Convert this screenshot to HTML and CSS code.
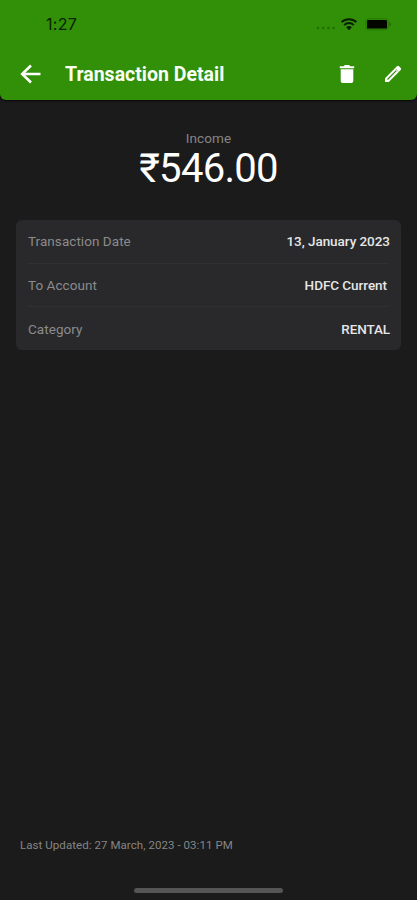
FILE: index.html
```html
<!DOCTYPE html>
<html lang="en">
<head>
<meta charset="utf-8">
<meta name="viewport" content="width=device-width, initial-scale=1">
<title>Transaction Detail</title>
<link rel="stylesheet" href="styles.css">
</head>
<body>
<div class="screen">
  <header class="header">
    <div class="status">
      <span class="time">1:27</span>
      <div class="indicators">
        <svg class="signal" width="20" height="4" viewBox="0 0 20 4"><g fill="#195b00" opacity=".65"><circle cx="2" cy="2" r="1.2"/><circle cx="7.2" cy="2" r="1.2"/><circle cx="12.4" cy="2" r="1.2"/><circle cx="17.6" cy="2" r="1.2"/></g></svg>
        <svg class="wifi" width="18" height="14" viewBox="0 0 18 14"><g fill="none" stroke="#061d00" stroke-width="2"><path d="M1.6 5.1a10.7 10.7 0 0 1 14.8 0"/><path d="M4.2 8.1a6.8 6.8 0 0 1 9.6 0"/></g><path d="M6.2 10.3a4 4 0 0 1 5.6 0L9 13.2z" fill="#061d00"/></svg>
        <svg class="battery" width="27" height="13" viewBox="0 0 27 13"><rect x=".8" y=".8" width="22.4" height="11" rx="2.6" fill="none" stroke="#267800" stroke-width="1"/><rect x="2" y="2" width="20" height="8.6" rx="1.2" fill="#020500"/><path d="M24.5 4.2c2 .7 2 3.5 0 4.2z" fill="#1e6a00"/></svg>
      </div>
    </div>
    <div class="toolbar">
      <svg class="back" width="22" height="20" viewBox="0 0 22 20"><path d="M20.5 10H2.5M11 1.5L2.2 10l8.8 8.5" fill="none" stroke="#fff" stroke-width="2.6"/></svg>
      <h1 class="title">Transaction Detail</h1>
      <svg class="trash" width="16" height="20" viewBox="0 0 16 20"><path d="M.8 2.2h4L5.8 1h4.4l1 1.2h4v2H.8zM1.7 5.2h12.6V17a2 2 0 0 1-2 2H3.7a2 2 0 0 1-2-2z" fill="#fff"/></svg>
      <svg class="pencil" width="18" height="18" viewBox="0 0 18 18"><path d="M1 13.2L12.9 1.3a1.5 1.5 0 0 1 2.1 0l1.7 1.7a1.5 1.5 0 0 1 0 2.1L4.8 17H1z" fill="#fff"/><path d="M3.5 14.5L12.3 5.7" stroke="#318f08" stroke-width="1.2"/><path d="M11.5 3.8l2.7 2.7" stroke="#318f08" stroke-width=".5"/></svg>
    </div>
  </header>
  <main class="content">
    <section class="summary">
      <span class="kind">Income</span>
      <span class="amount">₹546.00</span>
    </section>
    <dl class="card">
      <div class="row"><dt class="label l-date">Transaction Date</dt><dd class="value v-date">13, January 2023</dd></div>
      <div class="row"><dt class="label l-account">To Account</dt><dd class="value v-account">HDFC Current</dd></div>
      <div class="row"><dt class="label l-category">Category</dt><dd class="value v-category">RENTAL</dd></div>
    </dl>
  </main>
  <footer class="footer">
    <p class="updated">Last Updated: 27 March, 2023 - 03:11 PM</p>
    <div class="home"></div>
  </footer>
</div>
</body>
</html>
```
FILE: styles.css
```css
* { box-sizing: border-box; margin: 0; padding: 0; }
body { background: #1b1b1b; font-family: Roboto, "Liberation Sans", sans-serif; }
svg { display: block; flex: none; }
.screen { height: 900px; display: flex; flex-direction: column; overflow: hidden; background: #1b1b1b; }
.header { height: 100px; background: #318f08; border-radius: 0 0 6px 6px; box-shadow: 0 1px 2px #080808; }
.status { height: 48px; padding: 0 25px 0 46px; display: flex; justify-content: space-between; align-items: center; }
.time { font: 400 16px/20px Inter, sans-serif; color: #082400; letter-spacing: 0.3px; }
.indicators { display: flex; align-items: center; }
.signal { margin: 8px 4px 0 0; }
.wifi { margin-right: 7px; }
.toolbar { height: 52px; padding: 0 15px 0 20px; display: flex; align-items: center; }
.title { flex: 1; margin-left: 23px; padding-top: 1px; font-size: 19.5px; line-height: 24px; font-weight: 700; color: #f8fff5; white-space: nowrap; }
.trash { margin-right: 29px; }
.content { flex: 1; padding: 0 16px; }
.summary { display: flex; flex-direction: column; align-items: center; padding-top: 30px; }
.kind { font-size: 13.5px; line-height: 16px; letter-spacing: .1px; color: #858585; }
.amount { font-size: 40px; line-height: 42px; margin-top: 2px; color: #fff; letter-spacing: -0.7px; white-space: nowrap; }
.card { margin-top: 30px; height: 130px; border-radius: 6px; background: #29292b; padding: 0 12px; display: flex; flex-direction: column; }
.row { flex: 1; display: flex; align-items: center; justify-content: space-between; border-bottom: 1px solid #303032; font-size: 13.5px; line-height: 16px; letter-spacing: 0.05px; }
.row:last-child { border-bottom: 0; }
.label { color: #8b8b8c; }
.value { color: #e6e6e6; font-weight: 500; letter-spacing: -0.05px; margin-right: -1px; }
.v-account { margin-right: 2px; }
.v-category { letter-spacing: -0.1px; }
.footer { height: 64px; display: flex; flex-direction: column; align-items: center; justify-content: space-between; padding: 0 0 7px; }
.updated { align-self: flex-start; margin-left: 20px; font-size: 11.5px; line-height: 18px; letter-spacing: 0.06px; color: #858585; }
.home { width: 149px; height: 5px; border-radius: 3px; background: #555; }
```
